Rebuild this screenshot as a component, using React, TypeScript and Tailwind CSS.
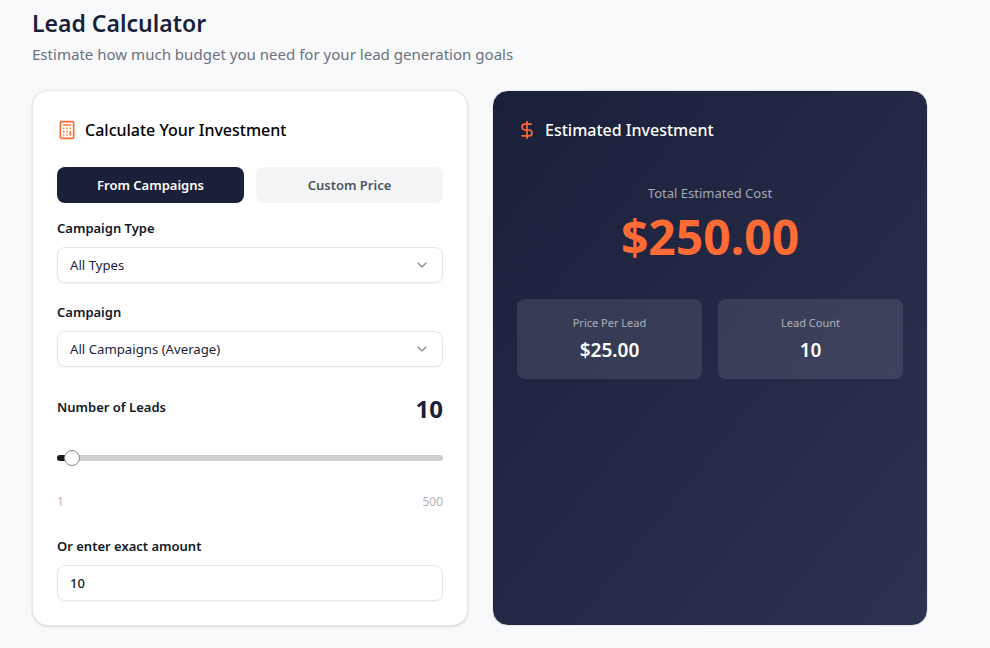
import { Calculator, ChevronDown, DollarSign } from "lucide-react";

function SelectField({ label, value }: { label: string; value: string }) {
  return (
    <div>
      <p className="text-[13px] leading-5 font-semibold text-[#111827] mb-[9px]">{label}</p>
      <div className="h-9 flex items-center justify-between rounded-lg border border-[#e5e7eb] bg-white px-3 text-[13.2px] text-[#1a1f3a] shadow-xs">
        <span className="pt-[2px]">{value}</span>
        <ChevronDown className="w-4 h-4 text-[#6b7280] opacity-80" />
      </div>
    </div>
  );
}

function StatBox({ label, value }: { label: string; value: string }) {
  return (
    <div className="h-20 rounded-lg bg-white/10 flex flex-col items-center pt-4">
      <p className="text-[11px] leading-4 text-white/60">{label}</p>
      <p className="mt-[5px] text-[19px] leading-7 font-semibold text-white">{value}</p>
    </div>
  );
}

export default function App() {
  return (
    <div className="min-h-[648px] bg-[#f8f9fb] px-8 pt-[7px] font-['Noto_Sans',sans-serif]">
      <div className="w-[896px]">
        <h1 className="text-[23px] leading-8 font-semibold text-[#1a1f3a]">Lead Calculator</h1>
        <p className="mt-[3px] text-[15.05px] leading-6 text-[#6b7280]">
          Estimate how much budget you need for your lead generation goals
        </p>

        <div className="mt-6 grid grid-cols-2 gap-6">
          {/* Left card */}
          <div className="h-[536px] rounded-2xl border border-[#e5e7eb] bg-white p-6 shadow-sm">
            <div className="flex items-center gap-2 h-6 mt-[3px]">
              <Calculator className="w-5 h-5 text-[#ff6b35]" />
              <h2 className="text-base leading-6 font-medium text-black">Calculate Your Investment</h2>
            </div>

            <div className="mt-[25px] grid grid-cols-2 gap-3">
              <div className="h-9 pt-[2px] rounded-lg bg-[#1a1f3a] flex items-center justify-center text-[13px] font-semibold text-white">
                From Campaigns
              </div>
              <div className="h-9 pt-[2px] rounded-lg bg-[#f3f4f6] flex items-center justify-center text-[13px] font-semibold text-[#4b5563]">
                Custom Price
              </div>
            </div>

            <div className="mt-[15px] flex flex-col gap-[19px]">
              <SelectField label="Campaign Type" value="All Types" />
              <SelectField label="Campaign" value="All Campaigns (Average)" />
            </div>

            <div className="mt-[25px] flex items-center justify-between h-8">
              <p className="text-[13px] font-semibold text-[#111827]">Number of Leads</p>
              <p className="mt-[1px] text-2xl font-bold text-[#1a1f3a]">10</p>
            </div>

            <div className="relative mt-[31px] h-[6px] rounded-full bg-[#cfcfcf]">
              <div className="h-full w-[14px] rounded-l-full bg-[#1a1a1a]" />
              <div className="absolute left-[7px] top-[-5px] w-4 h-4 rounded-full border border-[#8a8a8a] bg-white" />
            </div>

            <div className="mt-[33px] flex justify-between text-xs leading-4 text-[#b3b3b3]">
              <span>1</span>
              <span>500</span>
            </div>

            <p className="mt-[26px] text-[13px] leading-5 font-semibold text-[#111827]">Or enter exact amount</p>
            <div className="mt-[9px] h-9 flex items-center rounded-lg border border-[#e5e7eb] bg-white px-3 text-[13px] font-medium text-[#111827] shadow-xs">
              <span className="pt-[1px]">10</span>
            </div>
          </div>

          {/* Right card */}
          <div className="h-[536px] rounded-2xl border border-[#e5e7eb] bg-gradient-to-br from-[#1a1f3a] to-[#2d3250] p-6">
            <div className="flex items-center gap-2 h-6 mt-[3px]">
              <DollarSign className="w-5 h-5 text-[#ff6b35]" />
              <h2 className="text-base leading-6 font-medium text-white">Estimated Investment</h2>
            </div>

            <div className="mt-[41px] text-center">
              <p className="text-[13px] leading-5 text-white/60">Total Estimated Cost</p>
              <p className="mt-1 text-[48px] leading-[60px] font-bold text-[#ff6b35]">$250.00</p>
            </div>

            <div className="mt-8 grid grid-cols-2 gap-4">
              <StatBox label="Price Per Lead" value="$25.00" />
              <StatBox label="Lead Count" value="10" />
            </div>
          </div>
        </div>
      </div>
    </div>
  );
}
